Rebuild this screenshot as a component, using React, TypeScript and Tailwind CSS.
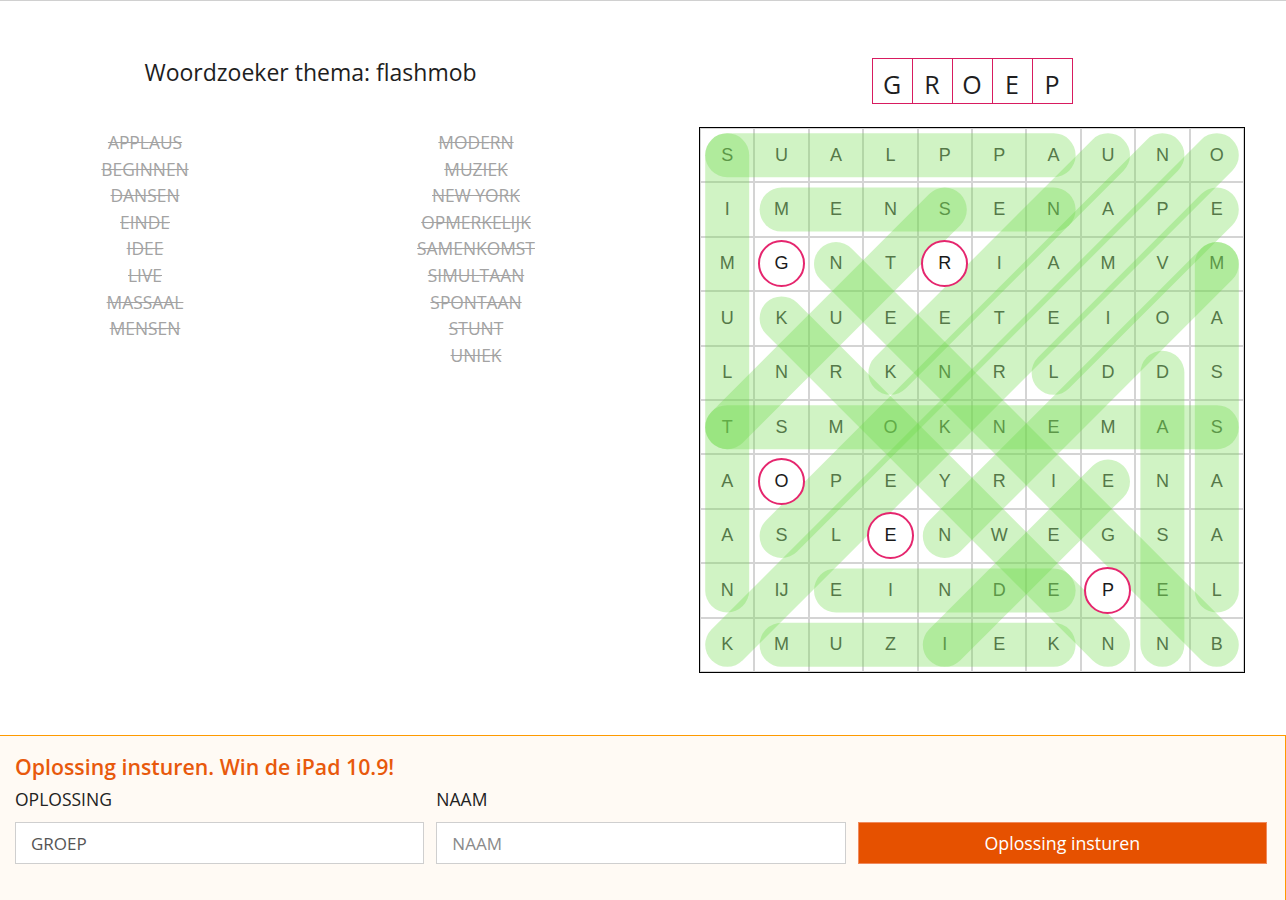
const rows: string[][] = [
  ['S', 'U', 'A', 'L', 'P', 'P', 'A', 'U', 'N', 'O'],
  ['I', 'M', 'E', 'N', 'S', 'E', 'N', 'A', 'P', 'E'],
  ['M', 'G', 'N', 'T', 'R', 'I', 'A', 'M', 'V', 'M'],
  ['U', 'K', 'U', 'E', 'E', 'T', 'E', 'I', 'O', 'A'],
  ['L', 'N', 'R', 'K', 'N', 'R', 'L', 'D', 'D', 'S'],
  ['T', 'S', 'M', 'O', 'K', 'N', 'E', 'M', 'A', 'S'],
  ['A', 'O', 'P', 'E', 'Y', 'R', 'I', 'E', 'N', 'A'],
  ['A', 'S', 'L', 'E', 'N', 'W', 'E', 'G', 'S', 'A'],
  ['N', 'IJ', 'E', 'I', 'N', 'D', 'E', 'P', 'E', 'L'],
  ['K', 'M', 'U', 'Z', 'I', 'E', 'K', 'N', 'N', 'B'],
];

// found words: [r1, c1, r2, c2]
const found: [number, number, number, number][] = [
  [0, 0, 0, 6],
  [0, 0, 8, 0],
  [1, 1, 1, 6],
  [3, 1, 9, 7],
  [2, 9, 8, 9],
  [5, 0, 5, 9],
  [9, 1, 9, 6],
  [8, 2, 8, 6],
  [0, 7, 4, 3],
  [4, 8, 9, 8],
  [0, 9, 9, 0],
  [0, 8, 7, 1],
  [2, 9, 7, 4],
  [1, 9, 4, 6],
  [2, 2, 9, 9],
  [1, 4, 5, 0],
  [6, 7, 9, 4],
];

const circled = ['2-1', '2-4', '6-1', '7-3', '8-7'];

const leftWords = ['APPLAUS', 'BEGINNEN', 'DANSEN', 'EINDE', 'IDEE', 'LIVE', 'MASSAAL', 'MENSEN'];
const rightWords = ['MODERN', 'MUZIEK', 'NEW YORK', 'OPMERKELIJK', 'SAMENKOMST', 'SIMULTAAN', 'SPONTAAN', 'STUNT', 'UNIEK'];

const CELL = 54.4;
const c = (i: number) => CELL * (i + 0.5);

function WordList({ words }: { words: string[] }) {
  return (
    <ul className="w-[290px] flex flex-col items-center">
      {words.map((w) => (
        <li key={w} className="text-[17.4px] leading-[26.6px] text-[#a3a3a3] line-through">
          {w}
        </li>
      ))}
    </ul>
  );
}

function Board() {
  return (
    <div className="relative w-[546px] h-[546px] border border-black bg-white">
      <div className="grid grid-cols-10 grid-rows-10 w-full h-full">
        {rows.map((row, r) =>
          row.map((letter, col) => {
            const isCircled = circled.includes(`${r}-${col}`);
            return (
              <div
                key={`${r}-${col}`}
                className="flex items-center justify-center border border-[#d4d4d4] text-[18px] text-[#4a4a4a]"
                style={{ fontFamily: '"Liberation Sans", Arial, sans-serif' }}
              >
                {isCircled ? (
                  <span className="relative z-[2] flex items-center justify-center w-[47px] h-[47px] rounded-full border-2 border-[#e5266e] bg-white text-[#1a1a1a]">
                    {letter}
                  </span>
                ) : (
                  letter
                )}
              </div>
            );
          })
        )}
      </div>
      <svg className="absolute inset-0 z-[1] pointer-events-none" width="544" height="544" viewBox="0 0 544 544">
        {found.map(([r1, c1, r2, c2], i) => (
          <line
            key={i}
            x1={c(c1)}
            y1={c(r1)}
            x2={c(c2)}
            y2={c(r2)}
            stroke="rgb(110,218,70)"
            strokeOpacity={0.32}
            strokeWidth={44}
            strokeLinecap="round"
          />
        ))}
      </svg>
    </div>
  );
}

export default function App() {
  return (
    <div className="min-h-[900px] bg-white border-t border-[#d0d0d0] text-[#222]" style={{ fontFamily: '"Open Sans", sans-serif' }}>
      <div className="flex pt-[56px] h-[734px]">
        <div className="w-[621px] flex flex-col">
          <h1 className="text-center text-[23px] leading-[30px] text-[#1e1e1e]">Woordzoeker thema: flashmob</h1>
          <div className="flex justify-between mt-[42px]">
            <WordList words={leftWords} />
            <WordList words={rightWords} />
          </div>
        </div>
        <div className="ml-[37px] flex-1 flex flex-col items-center">
          <div className="flex border-l border-[#d81b60] mt-[1px]">
            {'GROEP'.split('').map((ch, i) => (
              <div
                key={i}
                className="w-[40px] h-[46px] border-y border-r border-[#d81b60] flex items-end justify-center pb-[1px] text-[25px] leading-[36px] text-[#1e1e1e]"
              >
                {ch}
              </div>
            ))}
          </div>
          <div className="mt-[23px]">
            <Board />
          </div>
        </div>
      </div>
      <div className="border-t border-r border-amber-500 bg-[#fffaf4] px-[15px] pt-[15px] pb-[40px] h-[166px]">
        <h2 className="text-[21.3px] leading-[32px] font-semibold text-[#e8590c]">Oplossing insturen. Win de iPad 10.9!</h2>
        <div className="grid grid-cols-3 gap-x-3 w-[1252px] mt-[3px]">
          <label className="text-[17.5px] leading-[26px] text-[#222]">OPLOSSING</label>
          <label className="text-[17.5px] leading-[26px] text-[#222]">NAAM</label>
          <div />
          <input
            className="mt-[10px] h-[42px] border border-[#cfcfcf] bg-white px-[15px] text-[17px] text-[#555] outline-none"
            defaultValue="GROEP"
          />
          <input
            className="mt-[10px] h-[42px] border border-[#cfcfcf] bg-white px-[15px] text-[17px] text-[#555] outline-none placeholder:text-[#8a8a8a]"
            placeholder="NAAM"
          />
          <button className="mt-[10px] h-[42px] bg-[#e65100] text-white text-[17.8px] border border-[#f08a5d]">
            Oplossing insturen
          </button>
        </div>
      </div>
    </div>
  );
}
